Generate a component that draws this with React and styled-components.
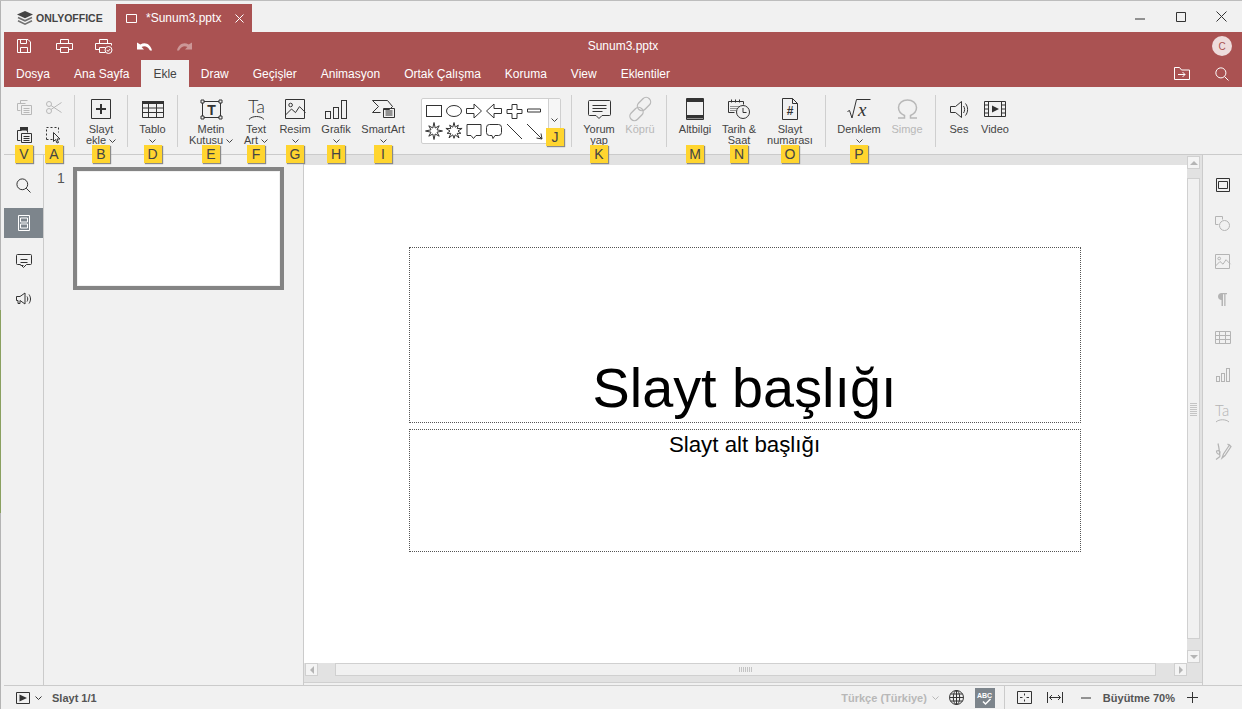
import React from "react";
import styled, { createGlobalStyle } from "styled-components";

const Global = createGlobalStyle`
  html, body {
    margin: 0;
    padding: 0;
    overflow: hidden;
    background: #f1f1f1;
  }
`;

const Win = styled.div`
  position: relative;
  width: 1242px;
  height: 709px;
  box-sizing: border-box;
  display: flex;
  flex-direction: column;
  padding-left: 4px;
  background: #f1f1f1;
  border-top: 1px solid #bdbdbd;
  box-shadow: inset 1px 0 0 #b4b4b4;
  font-family: "Liberation Sans", Arial, sans-serif;
  font-size: 11px;
  color: #444;
  /* bit of the green desktop showing at the window edge */
  &::before {
    content: "";
    position: absolute;
    left: 0;
    top: 309px;
    width: 1px;
    height: 203px;
    background: #8aa060;
  }
`;

const TitleBar = styled.div`
  height: 31px;
  display: flex;
  align-items: flex-end;
  flex-shrink: 0;
`;

const Logo = styled.div`
  width: 112px;
  height: 28px;
  display: flex;
  align-items: center;
  gap: 3px;
  padding-left: 13px;
  box-sizing: border-box;
  font-weight: 700;
  font-size: 10.5px;
  color: #444;
`;

const DocTab = styled.div`
  width: 136px;
  height: 28px;
  box-sizing: border-box;
  padding: 0 8px 0 10px;
  background: #aa5252;
  color: #fff;
  font-size: 12px;
  display: flex;
  align-items: center;
`;

const DocName = styled.span`
  margin-left: 8px;
  flex: 1;
`;

const WinButtons = styled.div`
  margin-left: auto;
  height: 31px;
  display: flex;
  color: #333;
`;

const WinBtn = styled.div`
  width: 41px;
  display: flex;
  align-items: center;
  justify-content: center;
  padding-top: ${(p) => p.$low || 0}px;
  box-sizing: border-box;
`;

const Header = styled.div`
  height: 55px;
  flex-shrink: 0;
  background: #aa5252;
  color: #fff;
  display: flex;
  flex-direction: column;
`;

const QuickRow = styled.div`
  height: 28px;
  display: flex;
  align-items: center;
  position: relative;
`;

const QuickBtn = styled.div`
  width: 40px;
  display: flex;
  justify-content: center;
  opacity: ${(p) => (p.$dim ? 0.4 : 1)};
`;

const FileTitle = styled.div`
  position: absolute;
  left: 0;
  right: 0;
  text-align: center;
  font-size: 12px;
`;

const Avatar = styled.div`
  margin-left: auto;
  margin-right: 10px;
  width: 20px;
  height: 20px;
  border-radius: 50%;
  background: #eedcdc;
  color: #aa5252;
  font-size: 10px;
  display: flex;
  align-items: center;
  justify-content: center;
  position: relative;
`;

const TabRow = styled.div`
  height: 27px;
  display: flex;
  align-items: stretch;
`;

const Tab = styled.div`
  padding: 0 12px;
  display: flex;
  align-items: center;
  font-size: 12px;
  background: ${(p) => (p.$active ? "#f1f1f1" : "transparent")};
  color: ${(p) => (p.$active ? "#444" : "#fff")};
`;

const TabActions = styled.div`
  margin-left: auto;
  display: flex;
  align-items: center;
  gap: 25px;
  padding-right: 13px;
`;

const Toolbar = styled.div`
  height: 68px;
  flex-shrink: 0;
  box-sizing: border-box;
  border-bottom: 1px solid #cbcbcb;
  display: flex;
  align-items: flex-start;
  padding-top: 9px;
  position: relative;
  z-index: 2;
`;

const MiniGrid = styled.div`
  display: grid;
  grid-template-columns: 30px 30px;
  grid-template-rows: 28px 28px;
  margin: -3px 5px 0 5px;
  width: 60px;
  flex-shrink: 0;
`;

const MiniCell = styled.div`
  position: relative;
  display: flex;
  align-items: center;
  justify-content: center;
  color: ${(p) => (p.$off ? "#b8b8b8" : "#333")};
`;

const Sep = styled.div`
  width: 1px;
  height: 52px;
  margin-top: -1px;
  margin-left: ${(p) => p.$ml || 0}px;
  background: #cfcfcf;
  flex-shrink: 0;
`;

const ToolIcon = styled.div`
  height: 28px;
  display: flex;
  align-items: center;
  justify-content: center;
  padding-bottom: 2px;
  box-sizing: border-box;
`;

const Tool = styled.div`
  position: relative;
  width: ${(p) => p.$w}px;
  flex-shrink: 0;
  display: flex;
  flex-direction: column;
  align-items: center;
  color: ${(p) => (p.$off ? "#b8b8b8" : "#444")};
  ${ToolIcon} {
    color: ${(p) => (p.$off ? "#b8b8b8" : "#333")};
  }
`;

const ToolLabel = styled.div`
  line-height: 11px;
  min-height: 11px;
  white-space: nowrap;
  text-align: center;
  display: flex;
  align-items: center;
  gap: 3px;
`;

const KeyTip = styled.div`
  position: absolute;
  top: ${(p) => p.$top ?? 49}px;
  left: ${(p) => (p.$corner ? "auto" : "50%")};
  right: ${(p) => (p.$corner ? "-4px" : "auto")};
  margin-left: ${(p) => (p.$corner ? 0 : -9)}px;
  width: 18px;
  height: 18px;
  background: #ffd52f;
  color: #444;
  box-shadow: 1px 1px 1px #8a8a8a;
  font-size: 14px;
  line-height: 18px;
  text-align: center;
  z-index: 5;
`;

const Gallery = styled.div`
  position: relative;
  width: 140px;
  height: 46px;
  margin: 2px 10px 0 5px;
  box-sizing: border-box;
  border: 1px solid #cfcfcf;
  border-radius: 2px;
  background: #fff;
  display: flex;
  flex-shrink: 0;
`;

const ShapeGrid = styled.div`
  width: 126px;
  padding: 2px 0 0 2px;
  box-sizing: border-box;
  display: grid;
  grid-template-columns: repeat(6, 20px);
  grid-auto-rows: 20px;
  color: #333;
`;

const GalleryMore = styled.div`
  flex: 1;
  border-left: 1px solid #cfcfcf;
  background: #f6f6f6;
  display: flex;
  justify-content: center;
  padding-top: 19px;
  box-sizing: border-box;
`;

const Main = styled.div`
  flex: 1;
  display: flex;
  min-height: 0;
`;

const SideBar = styled.div`
  width: 40px;
  flex-shrink: 0;
  box-sizing: border-box;
  border-right: ${(p) => (p.$right ? "none" : "1px solid #cbcbcb")};
  border-left: ${(p) => (p.$right ? "1px solid #cbcbcb" : "none")};
  padding-top: 15px;
  display: flex;
  flex-direction: column;
  gap: 8px;
`;

const SideBtn = styled.div`
  height: 30px;
  display: flex;
  align-items: center;
  justify-content: center;
  background: ${(p) => (p.$active ? "#7d858c" : "transparent")};
  color: ${(p) => (p.$active ? "#fff" : p.$off ? "#b4b4b4" : "#333")};
`;

const Thumbs = styled.div`
  width: 260px;
  flex-shrink: 0;
  box-sizing: border-box;
  border-right: 1px solid #cbcbcb;
  padding: 12px 0 0 13px;
  display: flex;
  align-items: flex-start;
`;

const ThumbNum = styled.div`
  width: 16px;
  margin-top: 4px;
  font-size: 14px;
  line-height: 15px;
  color: #555;
`;

const Thumb = styled.div`
  width: 211px;
  height: 123px;
  box-sizing: border-box;
  border: 4px solid #848484;
  padding: 1px;
  &::after {
    content: "";
    display: block;
    width: 100%;
    height: 100%;
    background: #fff;
  }
`;

const Editor = styled.div`
  flex: 1;
  display: grid;
  grid-template-columns: 883px 1fr;
  grid-template-rows: 10px 498px 1fr;
  min-width: 0;
`;

const TopBand = styled.div`
  background: #e2e2e2;
`;

const VScroll = styled.div`
  grid-row: 1 / 3;
  grid-column: 2;
  display: flex;
  flex-direction: column;
  padding-top: 1px;
  box-sizing: border-box;
  background: #e2e2e2;
  width: 15px;
`;

const ScrollBtn = styled.div`
  width: 13px;
  height: 13px;
  flex-shrink: 0;
  box-sizing: border-box;
  border: 1px solid #d0d0d0;
  background: #f4f4f4;
  display: flex;
  align-items: center;
  justify-content: center;
`;

const VThumb = styled.div`
  flex: 1;
  width: 13px;
  box-sizing: border-box;
  margin: 9px 0 11px;
  border: 1px solid #d0d0d0;
  background: #f1f1f1;
  display: flex;
  align-items: center;
  justify-content: center;
`;

const Grip = styled.div`
  width: ${(p) => (p.$flat ? 14 : 7)}px;
  height: ${(p) => (p.$flat ? 5 : 14)}px;
  background: ${(p) =>
    p.$flat
      ? "repeating-linear-gradient(90deg,#c4c4c4 0 1px,transparent 1px 2px)"
      : "repeating-linear-gradient(0deg,#c4c4c4 0 1px,transparent 1px 2px)"};
`;

const Canvas = styled.div`
  background: #fff;
  padding: 82px 0 0 105px;
  box-sizing: border-box;
  display: flex;
  flex-direction: column;
  gap: 6px;
  color: #000;
`;

const Placeholder = styled.div`
  width: 672px;
  height: ${(p) => p.$h}px;
  box-sizing: border-box;
  border: 1px dotted #555;
  text-align: center;
  display: flex;
  justify-content: center;
  align-items: ${(p) => (p.$bottom ? "flex-end" : "flex-start")};
  font-size: ${(p) => p.$size}px;
  line-height: 1;
  padding: ${(p) => p.$pad};
  white-space: nowrap;
`;

const HBand = styled.div`
  grid-column: 1 / 3;
  background: #e2e2e2;
  border-bottom: 1px solid #d0d0d0;
  height: 19px;
  padding-left: 1px;
  display: flex;
  width: 897px;
  box-sizing: content-box;
`;

const HThumb = styled.div`
  width: 821px;
  height: 13px;
  box-sizing: border-box;
  margin-left: 17px;
  border: 1px solid #d0d0d0;
  background: #f1f1f1;
  display: flex;
  align-items: center;
  justify-content: center;
`;

const StatusBar = styled.div`
  height: 24px;
  flex-shrink: 0;
  box-sizing: border-box;
  border-top: 1px solid #cbcbcb;
  display: flex;
  align-items: center;
  padding-left: 12px;
  font-weight: 700;
  color: #555;
`;

const SlideCount = styled.span`
  margin-left: 10px;
`;

const Lang = styled.span`
  margin-left: auto;
  color: #b8b8b8;
`;

const LangArrow = styled.span`
  color: #b8b8b8;
  display: flex;
`;

const StatusIcons = styled.span`
  display: flex;
  align-items: center;
  color: #333;
`;

const StatusSep = styled.div`
  width: 1px;
  height: 23px;
  background: #cbcbcb;
  margin: 0 12px 0 9px;
`;

const SpellBtn = styled.div`
  width: 20px;
  height: 20px;
  background: #7d858c;
  color: #fff;
  margin-left: 11px;
  display: flex;
  align-items: center;
  justify-content: center;
`;

const Gap = styled.span`
  display: inline-block;
  width: ${(p) => p.$w}px;
  flex-shrink: 0;
`;

const IconSvg = styled.svg`
  display: block;
  flex-shrink: 0;
  fill: none;
  stroke: currentColor;
  stroke-width: 1;
  overflow: visible;
`;

const Ico = ({ w, h, children }) => (
  <IconSvg width={w} height={h} viewBox={`0 0 ${w} ${h}`}>
    {children}
  </IconSvg>
);

const GlyphText = styled.text`
  fill: currentColor;
  stroke: none;
  font-family: ${(p) =>
    p.$serif ? '"Liberation Serif", serif' : p.$thin ? 'Lato, "Liberation Sans", sans-serif' : '"Liberation Sans", sans-serif'};
  font-style: ${(p) => (p.$italic ? "italic" : "normal")};
  font-weight: ${(p) => (p.$bold ? 700 : p.$thin ? 300 : 400)};
`;

const Solid = styled.path`
  fill: currentColor;
  stroke: none;
`;

const Chevron = () => (
  <Ico w={7} h={4}>
    <path d="M.5.5l3 3 3-3" />
  </Ico>
);

const StackLogo = () => (
  <Ico w={16} h={15}>
    <Solid d="M8 0l8 3.600-8 3.700L0 3.600z" />
    <path d="M1 6.600l7 3.200 7-3.200M1 9.800l7 3.300 7-3.300" strokeWidth="1.600" opacity=".75" />
  </Ico>
);

const Save = () => (
  <Ico w={14} h={14}>
    <path d="M.5.5h10.500l2.500 2.500v10.500h-13zM3.500.5v4h6v-4M3.500 13.500v-5h7v5" />
  </Ico>
);

const Printer = () => (
  <Ico w={17} h={14}>
    <path d="M4.500 4.500v-4h8v4M4.500 10.500h-4v-6h16v6h-4M4.500 8.500h8v5h-8z" />
  </Ico>
);

const QuickPrint = () => (
  <Ico w={18} h={15}>
    <path d="M4.500 4.500v-4h8v4M4.500 10.500h-4v-6h16v2M4.500 8.500h6M4.500 8.500v5h6" />
    <circle cx="13.500" cy="11" r="3.500" />
    <path d="M11.800 11l1.300 1.400 2-2.400" />
  </Ico>
);

const Undo = () => (
  <Ico w={15} h={9}>
    <Solid d="M0 .5v7h7L4.600 5c3-1.400 6-.7 8.400 3.500h2C13.500 2.500 8.500-.5 3.300 2.600z" />
  </Ico>
);

const Redo = () => (
  <Ico w={15} h={9}>
    <Solid d="M15 .5v7H8L10.400 5c-3-1.400-6-.7-8.400 3.500H0C1.500 2.500 6.500-.5 11.700 2.600z" />
  </Ico>
);

const FolderGo = () => (
  <Ico w={16} h={13}>
    <path d="M.5 12.500v-12h5l2 2.500h8v9.500zM4 7.500h7M8.500 5l2.500 2.500L8.500 10" />
  </Ico>
);

const Search = ({ size = 15 }) => (
  <Ico w={size} h={size}>
    <circle cx={size * 0.42} cy={size * 0.42} r={size * 0.36} />
    <path d={`M${size * 0.68} ${size * 0.68}L${size - 0.5} ${size - 0.5}`} />
  </Ico>
);

const Copy = () => (
  <Ico w={15} h={15}>
    <path d="M3.500 3.500v-3h7M.5 3.500h8M.5 3.500v7h3M4.500 5.500h10v9h-10zM6.500 8.500h6M6.500 10.500h6M6.500 12.500h6" />
  </Ico>
);

const Scissors = () => (
  <Ico w={16} h={13}>
    <circle cx="3" cy="3" r="2.500" />
    <circle cx="3" cy="10" r="2.500" />
    <path d="M5 4.500L15.500 11.500M5 8.500L15.500 1.500" />
  </Ico>
);

const Paste = () => (
  <Ico w={15} h={16}>
    <path d="M4.500 3.500h-4v10h3M9.500 3.500h1v2M3.500 2.500h6" />
    <Solid d="M3 0h8v3.500H3z" />
    <path d="M4.500 6.500h10v9h-10zM6.500 9.500h6M6.500 11.500h6M6.500 13.500h6" />
  </Ico>
);

const SelectAll = () => (
  <Ico w={16} h={17}>
    <path d="M.5 12.500v-12h12v5M.5 12.500h6" strokeDasharray="2 2" />
    <path d="M7.500 5.500v9l2-2 1.500 3.500 1.500-.5-1.500-3.500h3z" />
  </Ico>
);

const AddSlide = () => (
  <Ico w={20} h={20}>
    <path d="M.5.5h19v19H.5z" />
    <path d="M10 5v10M5 10h10" strokeWidth="2" />
  </Ico>
);

const TableIco = ({ w = 22, h = 17, plain }) => (
  <Ico w={w} h={h}>
    {!plain && <Solid d={`M0 0h${w}v3H0z`} />}
    <path d={`M.5.5h${w - 1}v${h - 1}H.5zM.5 ${plain ? 4.5 : 7}h${w - 1}M.5 ${plain ? 8.5 : 11.5}h${w - 1}M${Math.round(w / 3) - 0.5} ${plain ? 0 : 3}V${h}M${Math.round((w * 2) / 3) - 0.5} ${plain ? 0 : 3}V${h}`} />
  </Ico>
);

const TextBox = () => (
  <Ico w={21} h={19}>
    <path d="M1.500 1.500h18v16h-18z" />
    <path d="M0 0h3v3H0zM18 0h3v3h-3zM0 16h3v3H0zM18 16h3v3h-3z" fill="#f1f1f1" />
    <GlyphText x="10.500" y="14.500" fontSize="14" textAnchor="middle" $bold>T</GlyphText>
  </Ico>
);

const TextArt = () => (
  <Ico w={19} h={21}>
    <GlyphText x="1" y="14" fontSize="18" $thin>Ta</GlyphText>
    <path d="M2 20.500c3-4 12-4 15 0" />
  </Ico>
);

const TextArtSmall = () => (
  <Ico w={15} h={19}>
    <GlyphText x="0" y="12" fontSize="15" $thin>Ta</GlyphText>
    <path d="M1 18c3-3 10-3 13 0" />
  </Ico>
);

const Picture = ({ s = 20 }) => (
  <Ico w={s} h={s}>
    <path d={`M.5.5h${s - 1}v${s - 1}H.5z`} />
    <circle cx={s * 0.28} cy={s * 0.3} r={s * 0.09} />
    <path d={`M.5 ${s * 0.8}l${s * 0.3}-${s * 0.3} ${s * 0.2} ${s * 0.18} ${s * 0.2}-${s * 0.3} ${s * 0.3} ${s * 0.3}`} />
  </Ico>
);

const Bars = ({ w = 22, h = 19, b = 5 }) => {
  const step = (w - 1 - b) / 2;
  const heights = [0.37, 0.63, 1].map((k) => Math.round((h - 1) * k));
  return (
    <Ico w={w} h={h}>
      {heights.map((bh, i) => (
        <rect key={i} x={0.5 + step * i} y={h - 0.5 - bh} width={b} height={bh} />
      ))}
    </Ico>
  );
};

const SmartArtIco = () => (
  <Ico w={23} h={19}>
    <path d="M.5.5h15l5 6-3 3H12M.5.5l6 6-6 6h8" />
    <path d="M11.500 8.500h11v9h-11zM14 11h6.500M14 13h6.500M14 15h6.500M13 11h.5M13 13h.5M13 15h.5" />
  </Ico>
);

const Comment = ({ w = 23, h = 19 }) => (
  <Ico w={w} h={h}>
    <path d={`M1.500.5h${w - 3}a1 1 0 0 1 1 1v${h - 6}a1 1 0 0 1-1 1h-${w / 2 - 4}l-3 3-3-3h-${w / 2 - 5}a1 1 0 0 1-1-1v-${h - 6}a1 1 0 0 1 1-1z`} />
    <path d={`M4.500 5.500h${w - 9}M4.500 8.500h${w - 9}M4.500 11.500h${w - 13}`} />
  </Ico>
);

const LinkIco = () => (
  <Ico w={23} h={22}>
    <g strokeWidth="1.300">
      <rect x="10.500" y="-1.500" width="9" height="15" rx="4.500" transform="rotate(45 15 6)" />
      <rect x="3" y="8.500" width="9" height="15" rx="4.500" transform="rotate(45 7.500 16)" />
    </g>
  </Ico>
);

const Footer = () => (
  <Ico w={18} h={22}>
    <path d="M.5.5h17v21H.5z" />
    <Solid d="M1 1h16v3H1zM1 17h16v3.500H1z" />
  </Ico>
);

const DateTime = () => (
  <Ico w={22} h={20}>
    <path d="M.5 2.500h15v3M.5 2.500v11h6M3.500.5v3M7.500.5v3M11.500.5v3" />
    <path d="M2.500 7.500h1m1 0h1m1 0h1m1 0h1m1 0h1M2.500 9.500h1m1 0h1m1 0h1m1 0h1M2.500 11.500h1m1 0h1m1 0h1" />
    <circle cx="15" cy="13" r="6.500" />
    <path d="M15 9v4.500h3.500" />
  </Ico>
);

const PageNum = () => (
  <Ico w={16} h={22}>
    <path d="M.5.5h10l5 5v16H.5zM10.500.5v5h5" />
    <GlyphText x="8" y="17" fontSize="12" textAnchor="middle" $bold>#</GlyphText>
  </Ico>
);

const Equation = () => (
  <Ico w={24} h={20}>
    <path d="M.5 12.500l2-1 2.500 7.500L9.500.5H23.500" />
    <GlyphText x="11" y="17" fontSize="19" $serif $italic>x</GlyphText>
  </Ico>
);

const Omega = () => (
  <Ico w={21} h={20}>
    <path d="M1 19h6.500v-2.500C4 15 1.500 12 1.500 8.500 1.500 4 5.500 1 10.500 1s9 3 9 7.500c0 3.500-2.500 6.500-6 8V19H20" strokeWidth="1.500" />
  </Ico>
);

const Speaker = () => (
  <Ico w={19} h={17}>
    <path d="M.5 5.500h5l6-5v16l-6-5h-5z" />
    <path d="M13.500 5c1.500 2 1.500 5 0 7M15.500 2.500c2.800 3.500 2.800 8.500 0 12" />
  </Ico>
);

const Video = () => (
  <Ico w={22} h={16}>
    <path d="M.5.5h21v15H.5zM4.500.5v15M17.500.5v15M.5 4h4M.5 8h4M.5 12h4M17.500 4h4M17.500 8h4M17.500 12h4" />
    <Solid d="M8 4.500l7 3.500-7 3.500z" />
  </Ico>
);

const SlidesIco = () => (
  <Ico w={12} h={16}>
    <path d="M.5.5h11v15H.5zM2.500 3h7v4h-7zM2.500 9h7v4h-7z" />
  </Ico>
);

const Announce = () => (
  <Ico w={16} h={14}>
    <path d="M.5 4.500h3.500l5-3.500v11L4 8.500v3H2v-3H.5z" />
    <path d="M11 4.500c1 1.500 1 3.500 0 5M13 2.500c2 3 2 6 0 9" />
  </Ico>
);

const SlideSet = () => (
  <Ico w={14} h={14}>
    <path d="M.5.5h13v13H.5z" />
    <path d="M2.500 3.500h9v7h-9z" />
  </Ico>
);

const ShapeSet = () => (
  <Ico w={15} h={15}>
    <path d="M.5.5h7v3M.5.5v8h3" />
    <circle cx="9.500" cy="9.500" r="5" />
  </Ico>
);

const Pilcrow = () => (
  <Ico w={9} h={13}>
    <Solid d="M3.500 0C1.500 0 0 1.500 0 3.500S1.500 7 3.500 7V13H5V1.200h1.200V13H7.500V1.200H9V0z" />
  </Ico>
);

const SignIco = () => (
  <Ico w={17} h={17}>
    <g strokeWidth="1.200">
      <path d="M4 .5c1 4 1.500 8 2 13M6 13.500l-4 3M2.500 8c2-1 4 0 3.500 2s-3.500 1.500-3.500-2z" />
      <path d="M15.500 2l-6 9-1.500 4 3-2.500 6-9zM13.500 1l3 2" />
    </g>
  </Ico>
);

const PlayBox = () => (
  <Ico w={14} h={12}>
    <path d="M.5.5h13v11H.5z" />
    <Solid d="M3.500 2.500l7.500 3.500-7.500 3.500z" />
  </Ico>
);

const Globe = () => (
  <Ico w={15} h={15}>
    <circle cx="7.500" cy="7.500" r="7" />
    <ellipse cx="7.500" cy="7.500" rx="3.200" ry="7" />
    <path d="M7.500.5v14M1.500 4h12M.5 7.500h14M1.500 11h12" />
  </Ico>
);

const FitPage = () => (
  <Ico w={15} h={13}>
    <path d="M.5.5h14v12H.5zM7.500 2.500v2M7.500 8.500v2M3 6.500h2.500M9.500 6.500H12" />
  </Ico>
);

const FitWidth = () => (
  <Ico w={16} h={11}>
    <path d="M.5 0v11M15.500 0v11M2.500 5.500h11M5 3L2.500 5.500 5 8M11 3l2.500 2.500L11 8" />
  </Ico>
);

const Cross = ({ s = 10 }) => (
  <Ico w={s} h={s}>
    <path d={`M.5.5L${s - 0.5} ${s - 0.5}M${s - 0.5} .5L.5 ${s - 0.5}`} />
  </Ico>
);

const Arrow = ({ dir }) => {
  const d = {
    up: "M0 5l4-4 4 4z",
    down: "M0 1l4 4 4-4z",
    left: "M6 0L2 4l4 4z",
    right: "M2 0l4 4-4 4z",
  }[dir];
  return (
    <Ico w={8} h={dir === "up" || dir === "down" ? 6 : 8}>
      <path d={d} fill="#b5b5b5" stroke="none" />
    </Ico>
  );
};

// explosion shapes in the gallery: points alternate between outer and inner radius
const burst = (n, outer, inner) => {
  const pts = [];
  for (let i = 0; i < n * 2; i++) {
    const r = i % 2 ? inner : outer - (i % 4 === 0 ? 0 : 1.2);
    const a = (Math.PI * i) / n - Math.PI / 2;
    pts.push(`${(10 + r * Math.cos(a)).toFixed(1)} ${(10 + r * Math.sin(a)).toFixed(1)}`);
  }
  return `M${pts.join("L")}z`;
};

const shapes = [
  <rect x="2.500" y="4.500" width="15" height="11" />,
  <ellipse cx="10" cy="10" rx="7.500" ry="5.500" />,
  <path d="M2.500 7.500h7.500v-4.500l7.500 7-7.500 7v-4.500h-7.500z" />,
  <path d="M17.500 7.500h-7.500v-4.500l-7.500 7 7.500 7v-4.500h7.500z" />,
  <path d="M8 3.500h5v5h5v4h-5v5h-5v-5h-5v-4h5z" />,
  <path d="M3.500 8h13v3h-13z" />,
  <path d="M0 0" />,
  <path d="M0 0" />,
  <path d="M3 3.500h14v11h-5l-2.500 3-2.500-3h-4z" />,
  <path d="M5.500 3.500h9a3 3 0 0 1 3 3v5a3 3 0 0 1-3 3h-3.500l-2 3-1-3h-2.500a3 3 0 0 1-3-3v-5a3 3 0 0 1 3-3z" />,
  <path d="M3 3l15 15" />,
  <path d="M3 3l15 15M18 18l-5.500-1M18 18l-1-5.500" />,
];
shapes[6] = <path d={burst(8, 8.5, 3.2)} />;
shapes[7] = <path d={burst(10, 8.5, 4)} />;

const tabs = ["Dosya", "Ana Sayfa", "Ekle", "Draw", "Geçişler", "Animasyon", "Ortak Çalışma", "Koruma", "View", "Eklentiler"];

const sideRight = [
  <ShapeSet />,
  <Picture s={15} />,
  <Pilcrow />,
  <TableIco w={16} h={13} plain />,
  <Bars w={14} h={14} b={3} />,
  <TextArtSmall />,
  <SignIco />,
];

export default function App() {
  return (
    <Win>
      <Global />
      <TitleBar>
        <Logo>
          <StackLogo />
          ONLYOFFICE
        </Logo>
        <DocTab>
          <Ico w={12} h={9}><path d="M.5.5h10v8h-10z" /></Ico>
          <DocName>*Sunum3.pptx</DocName>
          <Cross s={9} />
        </DocTab>
        <WinButtons>
          <WinBtn $low={4}><Ico w={10} h={2}><path d="M0 1h10" /></Ico></WinBtn>
          <WinBtn><Ico w={10} h={10}><path d="M.5.5h9v9h-9z" /></Ico></WinBtn>
          <WinBtn><Cross s={11} /></WinBtn>
        </WinButtons>
      </TitleBar>

      <Header>
        <QuickRow>
          <FileTitle>Sunum3.pptx</FileTitle>
          <QuickBtn><Save /></QuickBtn>
          <QuickBtn><Printer /></QuickBtn>
          <QuickBtn><QuickPrint /></QuickBtn>
          <QuickBtn><Undo /></QuickBtn>
          <QuickBtn $dim><Redo /></QuickBtn>
          <Avatar>C</Avatar>
        </QuickRow>
        <TabRow>
          {tabs.map((t) => (
            <Tab key={t} $active={t === "Ekle"}>{t}</Tab>
          ))}
          <TabActions>
            <FolderGo />
            <Search size={14} />
          </TabActions>
        </TabRow>
      </Header>

      <Toolbar>
        <MiniGrid>
          <MiniCell $off><Copy /></MiniCell>
          <MiniCell $off><Scissors /></MiniCell>
          <MiniCell><Paste /><KeyTip $top={24}>V</KeyTip></MiniCell>
          <MiniCell><SelectAll /><KeyTip $top={24}>A</KeyTip></MiniCell>
        </MiniGrid>
        <Sep />
        <Tool $w={52}>
          <ToolIcon><AddSlide /></ToolIcon>
          <ToolLabel>Slayt</ToolLabel>
          <ToolLabel>ekle <Chevron /></ToolLabel>
          <KeyTip>B</KeyTip>
        </Tool>
        <Sep />
        <Tool $w={49}>
          <ToolIcon><TableIco /></ToolIcon>
          <ToolLabel>Tablo</ToolLabel>
          <ToolLabel><Chevron /></ToolLabel>
          <KeyTip>D</KeyTip>
        </Tool>
        <Sep />
        <Tool $w={66}>
          <ToolIcon><TextBox /></ToolIcon>
          <ToolLabel>Metin</ToolLabel>
          <ToolLabel>Kutusu <Chevron /></ToolLabel>
          <KeyTip>E</KeyTip>
        </Tool>
        <Tool $w={24}>
          <ToolIcon><TextArt /></ToolIcon>
          <ToolLabel>Text</ToolLabel>
          <ToolLabel>Art <Chevron /></ToolLabel>
          <KeyTip>F</KeyTip>
        </Tool>
        <Tool $w={54}>
          <ToolIcon><Picture /></ToolIcon>
          <ToolLabel>Resim</ToolLabel>
          <ToolLabel><Chevron /></ToolLabel>
          <KeyTip>G</KeyTip>
        </Tool>
        <Tool $w={28}>
          <ToolIcon><Bars /></ToolIcon>
          <ToolLabel>Grafik</ToolLabel>
          <ToolLabel><Chevron /></ToolLabel>
          <KeyTip>H</KeyTip>
        </Tool>
        <Tool $w={66}>
          <ToolIcon><SmartArtIco /></ToolIcon>
          <ToolLabel>SmartArt</ToolLabel>
          <ToolLabel><Chevron /></ToolLabel>
          <KeyTip>I</KeyTip>
        </Tool>
        <Gallery>
          <ShapeGrid>
            {shapes.map((s, i) => (
              <Ico key={i} w={20} h={20}>{s}</Ico>
            ))}
          </ShapeGrid>
          <GalleryMore><Chevron /></GalleryMore>
          <KeyTip $top={29} $corner>J</KeyTip>
        </Gallery>
        <Sep />
        <Tool $w={54}>
          <ToolIcon><Comment /></ToolIcon>
          <ToolLabel>Yorum</ToolLabel>
          <ToolLabel>yap</ToolLabel>
          <KeyTip>K</KeyTip>
        </Tool>
        <Tool $w={28} $off>
          <ToolIcon><LinkIco /></ToolIcon>
          <ToolLabel>Köprü</ToolLabel>
        </Tool>
        <Sep $ml={12} />
        <Tool $w={56}>
          <ToolIcon><Footer /></ToolIcon>
          <ToolLabel>Altbilgi</ToolLabel>
          <KeyTip>M</KeyTip>
        </Tool>
        <Tool $w={32}>
          <ToolIcon><DateTime /></ToolIcon>
          <ToolLabel>Tarih &amp;</ToolLabel>
          <ToolLabel>Saat</ToolLabel>
          <KeyTip>N</KeyTip>
        </Tool>
        <Tool $w={70}>
          <ToolIcon><PageNum /></ToolIcon>
          <ToolLabel>Slayt</ToolLabel>
          <ToolLabel>numarası</ToolLabel>
          <KeyTip>O</KeyTip>
        </Tool>
        <Sep />
        <Tool $w={66}>
          <ToolIcon><Equation /></ToolIcon>
          <ToolLabel>Denklem</ToolLabel>
          <ToolLabel><Chevron /></ToolLabel>
          <KeyTip>P</KeyTip>
        </Tool>
        <Tool $w={30} $off>
          <ToolIcon><Omega /></ToolIcon>
          <ToolLabel>Simge</ToolLabel>
        </Tool>
        <Sep $ml={13} />
        <Tool $w={46}>
          <ToolIcon><Speaker /></ToolIcon>
          <ToolLabel>Ses</ToolLabel>
        </Tool>
        <Tool $w={26}>
          <ToolIcon><Video /></ToolIcon>
          <ToolLabel>Video</ToolLabel>
        </Tool>
      </Toolbar>

      <Main>
        <SideBar>
          <SideBtn><Search /></SideBtn>
          <SideBtn $active><SlidesIco /></SideBtn>
          <SideBtn><Comment w={16} h={14} /></SideBtn>
          <SideBtn><Announce /></SideBtn>
        </SideBar>
        <Thumbs>
          <ThumbNum>1</ThumbNum>
          <Thumb />
        </Thumbs>
        <Editor>
          <TopBand />
          <VScroll>
            <ScrollBtn><Arrow dir="up" /></ScrollBtn>
            <VThumb><Grip /></VThumb>
            <ScrollBtn><Arrow dir="down" /></ScrollBtn>
          </VScroll>
          <Canvas>
            <Placeholder $h={176} $bottom $size={55.8} $pad="0 1px 6px 0">Slayt başlığı</Placeholder>
            <Placeholder $h={123} $size={22.3} $pad="4px 1px 0 0">Slayt alt başlığı</Placeholder>
          </Canvas>
          <HBand>
            <ScrollBtn><Arrow dir="left" /></ScrollBtn>
            <HThumb><Grip $flat /></HThumb>
            <Gap $w={18} />
            <ScrollBtn><Arrow dir="right" /></ScrollBtn>
          </HBand>
        </Editor>
        <SideBar $right>
          <SideBtn><SlideSet /></SideBtn>
          {sideRight.map((ic, i) => (
            <SideBtn key={i} $off>{ic}</SideBtn>
          ))}
        </SideBar>
      </Main>

      <StatusBar>
        <StatusIcons>
          <PlayBox />
          <Gap $w={5} />
          <Chevron />
        </StatusIcons>
        <SlideCount>Slayt 1/1</SlideCount>
        <Lang>Türkçe (Türkiye)</Lang>
        <Gap $w={5} />
        <LangArrow><Chevron /></LangArrow>
        <Gap $w={10} />
        <StatusIcons><Globe /></StatusIcons>
        <SpellBtn>
          <Ico w={15} h={14}>
            <GlyphText x="0" y="7" fontSize="7" $bold>ABC</GlyphText>
            <path d="M6 10.500l2.500 2.500 5-5" strokeWidth="1.500" />
          </Ico>
        </SpellBtn>
        <StatusSep />
        <StatusIcons>
          <FitPage />
          <Gap $w={15} />
          <FitWidth />
          <Gap $w={18} />
          <Ico w={10} h={2}><path d="M0 1h10" /></Ico>
        </StatusIcons>
        <Gap $w={12} />
        <span>Büyütme 70%</span>
        <Gap $w={12} />
        <StatusIcons><Ico w={11} h={11}><path d="M5.500 0v11M0 5.500h11" /></Ico></StatusIcons>
        <Gap $w={44} />
      </StatusBar>
    </Win>
  );
}
